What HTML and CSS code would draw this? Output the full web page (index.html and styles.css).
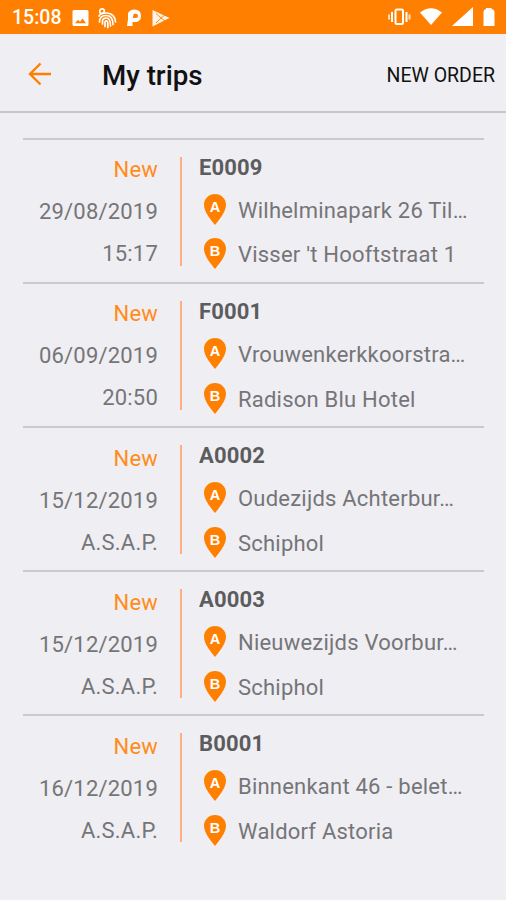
FILE: index.html
```html
<!DOCTYPE html>
<html lang="en">
<head>
    <meta charset="UTF-8">
    <meta name="viewport" content="width=device-width, initial-scale=1.0">
    <title>My trips</title>
    <link rel="stylesheet" href="styles.css">
</head>
<body>
    <!-- Pin shapes shared by all trips -->
    <svg class="defs" width="0" height="0">
        <symbol id="pin" viewBox="0 0 22 31">
            <path fill="#ff8000" d="M11 0C4.8 0 0 4.8 0 10.8C0 18 7 26 11 31C15 26 22 18 22 10.8C22 4.800 17.200 0 11 0Z"/>
        </symbol>
    </svg>

    <div class="status-bar">
        <span class="clock">15:08</span>
        <svg class="status-left" width="100" height="22" viewBox="0 0 100 22">
            <!-- picture -->
            <path fill="#fff" fill-rule="evenodd" d="M2 3H15Q16.500 3 16.500 4.500V17.500Q16.500 19 15 19H2Q.5 19 .5 17.500V4.500Q.5 3 2 3ZM3 16.300H14L10.600 11.500L8 14.700L6 12.700Z"/>
            <!-- fingerprint bird -->
            <g fill="none" stroke="#fff" stroke-width="1.700" stroke-linecap="round">
                <circle cx="30" cy="4.200" r="2.300"/>
                <path d="M27 9C28 6.500 31 6 34 6C40 6 43.500 10 43.500 15"/>
                <path d="M27.500 15C27.500 11 30 8.500 34 8.500C38.500 8.500 41 11.500 41 17.500"/>
                <path d="M30.500 17V14.500C30.500 12.500 32 11 34.500 11C37 11 38.500 13 38.500 19"/>
                <path d="M33 19.500V15C33 13.500 35.800 13.500 35.800 15.500V20.500"/>
            </g>
            <!-- parking -->
            <path fill="#fff" fill-rule="evenodd" d="M56 6Q58 2.500 62.500 2.500Q69 2.500 69 9Q69 15 62.500 15H60.500V19H55L56 12.500ZM61.700 6.800H64Q66 6.800 66 9Q66 11 64 11H60.800Z"/>
            <!-- play store -->
            <path fill="#fff" fill-opacity=".9" d="M80.500 3L97.500 11L80.500 19.500Z"/>
            <path fill="none" stroke="#ff8000" stroke-width=".9" d="M84 6.500L89 11L84 16M89 11L93 8M89 11L93 14"/>
        </svg>
        <svg class="status-right" width="110" height="20" viewBox="0 0 110 20">
            <!-- vibrate -->
            <g fill="none" stroke="#fff" stroke-width="2">
                <rect x="9.500" y="2.500" width="7.500" height="14.500" rx="1.500"/>
                <path d="M6 5V15M20.500 5V15"/>
                <path d="M3 7.500V12.500M23.500 7.500V12.500" stroke-opacity=".75"/>
            </g>
            <!-- wifi -->
            <path fill="#fff" d="M34 5.500Q45-3 56 5.500L45 18Z"/>
            <!-- signal -->
            <path fill="#fff" d="M87 0V19H66Z"/>
            <!-- battery -->
            <path fill="#fff" d="M100 1H105.500V2Q108.500 2.500 108.500 5V19H97.500V5Q97.500 2.500 100 2Z"/>
        </svg>
    </div>

    <div class="header">
        <svg class="back" width="24" height="24" viewBox="0 0 24 24">
            <path fill="none" stroke="#ff8000" stroke-width="2.400" d="M23 12H2.500M12.500 1.500L2 12L12.500 22.500"/>
        </svg>
        <h1>My trips</h1>
        <span class="new-order">NEW ORDER</span>
    </div>

    <div class="trips">
        <div class="trip">
            <div class="when">
                <div class="state">New</div>
                <div>29/08/2019</div>
                <div>15:17</div>
            </div>
            <div class="route">
                <div class="code">E0009</div>
                <div class="place">
                    <svg class="pin" viewBox="0 0 22 31"><use href="#pin"/><text x="11" y="18">A</text></svg>
                    <span>Wilhelminapark 26 Til…</span>
                </div>
                <div class="place">
                    <svg class="pin" viewBox="0 0 22 31"><use href="#pin"/><text x="11" y="18">B</text></svg>
                    <span>Visser 't Hooftstraat 1</span>
                </div>
            </div>
        </div>
        <div class="trip">
            <div class="when">
                <div class="state">New</div>
                <div>06/09/2019</div>
                <div>20:50</div>
            </div>
            <div class="route">
                <div class="code">F0001</div>
                <div class="place">
                    <svg class="pin" viewBox="0 0 22 31"><use href="#pin"/><text x="11" y="18">A</text></svg>
                    <span>Vrouwenkerkkoorstra…</span>
                </div>
                <div class="place">
                    <svg class="pin" viewBox="0 0 22 31"><use href="#pin"/><text x="11" y="18">B</text></svg>
                    <span>Radison Blu Hotel</span>
                </div>
            </div>
        </div>
        <div class="trip">
            <div class="when">
                <div class="state">New</div>
                <div>15/12/2019</div>
                <div>A.S.A.P.</div>
            </div>
            <div class="route">
                <div class="code">A0002</div>
                <div class="place">
                    <svg class="pin" viewBox="0 0 22 31"><use href="#pin"/><text x="11" y="18">A</text></svg>
                    <span>Oudezijds Achterbur…</span>
                </div>
                <div class="place">
                    <svg class="pin" viewBox="0 0 22 31"><use href="#pin"/><text x="11" y="18">B</text></svg>
                    <span>Schiphol</span>
                </div>
            </div>
        </div>
        <div class="trip">
            <div class="when">
                <div class="state">New</div>
                <div>15/12/2019</div>
                <div>A.S.A.P.</div>
            </div>
            <div class="route">
                <div class="code">A0003</div>
                <div class="place">
                    <svg class="pin" viewBox="0 0 22 31"><use href="#pin"/><text x="11" y="18">A</text></svg>
                    <span>Nieuwezijds Voorbur…</span>
                </div>
                <div class="place">
                    <svg class="pin" viewBox="0 0 22 31"><use href="#pin"/><text x="11" y="18">B</text></svg>
                    <span>Schiphol</span>
                </div>
            </div>
        </div>
        <div class="trip">
            <div class="when">
                <div class="state">New</div>
                <div>16/12/2019</div>
                <div>A.S.A.P.</div>
            </div>
            <div class="route">
                <div class="code">B0001</div>
                <div class="place">
                    <svg class="pin" viewBox="0 0 22 31"><use href="#pin"/><text x="11" y="18">A</text></svg>
                    <span>Binnenkant 46 - belet…</span>
                </div>
                <div class="place">
                    <svg class="pin" viewBox="0 0 22 31"><use href="#pin"/><text x="11" y="18">B</text></svg>
                    <span>Waldorf Astoria</span>
                </div>
            </div>
        </div>
    </div>
</body>
</html>
```

FILE: styles.css
```css
body {
    font-family: Roboto, sans-serif;
    background-color: #efeef3;
    margin: 0;
    color: #757578;
    height: 900px;
    overflow: hidden;
}

.defs {
    display: block;
}

.status-bar {
    display: flex;
    align-items: center;
    height: 34px;
    padding: 0 10px 0 12px;
    box-sizing: border-box;
    background-color: #ff8000;
    color: #fff;
}

.clock {
    width: 60px;
    font-size: 19.5px;
    font-weight: 500;
    line-height: 34px;
    padding-top: 2px;
}

.status-left {
    margin-top: 1px;
}

.status-right {
    margin-left: auto;
}

.header {
    display: flex;
    align-items: center;
    height: 79px;
    padding: 0 11px 0 28px;
    box-sizing: border-box;
    border-bottom: 2px solid #c8c7cc;
    color: #111;
}

.header .back {
    margin-top: 2px;
}

.header h1 {
    flex: 1;
    margin: 7px 0 0 50px;
    font-size: 27.7px;
    font-weight: 500;
    line-height: 32px;
}

.new-order {
    margin-top: 6px;
    font-size: 19.5px;
    line-height: 24px;
}

.trips {
    padding: 25px 22px 0 23px;
}

.trip {
    display: flex;
    height: 144.1px;
    box-sizing: border-box;
    border-top: 2px solid #cac9ce;
}

.when {
    width: 135px;
    padding-top: 9.4px;
    font-size: 22px;
    line-height: 42px;
    text-align: right;
    letter-spacing: 0.2px;
}

.state {
    color: #ff8c1a;
}

.route {
    flex: 1;
    height: 109px;
    margin: 16.5px 0 0 22px;
    padding-left: 17px;
    border-left: 2px solid #ffad85;
}

.code {
    font-size: 22px;
    font-weight: 700;
    line-height: 22px;
    letter-spacing: 0.15px;
    color: #5c5c5e;
}

.place {
    display: flex;
    align-items: center;
    height: 44.7px;
    font-size: 22px;
    letter-spacing: 0.22px;
    white-space: nowrap;
}

.place span {
    padding-top: 2px;
}

.code + .place {
    margin-top: 8.4px;
}

.pin {
    width: 22px;
    height: 31px;
    margin: 0 12px 0 5px;
}

.pin text {
    fill: #fff;
    font-family: "Liberation Sans", sans-serif;
    font-size: 14.5px;
    font-weight: 700;
    letter-spacing: 0;
    text-anchor: middle;
}
```
